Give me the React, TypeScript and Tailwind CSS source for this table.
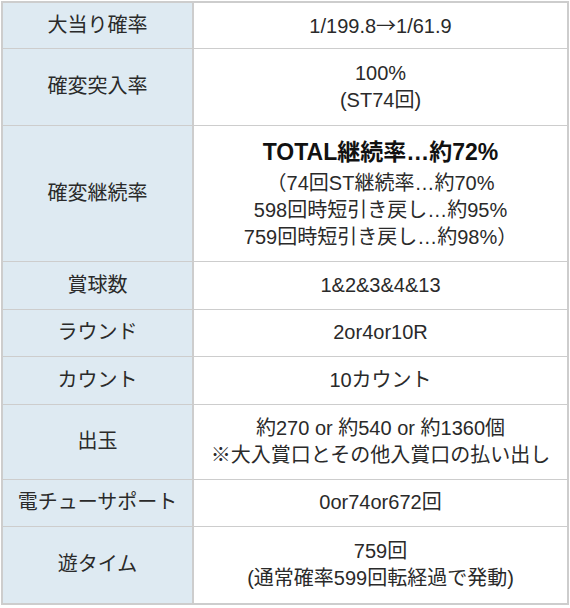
const jp = "font-['Noto_Sans_CJK_JP',sans-serif]";

const rows: { label: string; h: string; content: React.ReactNode }[] = [
  {
    label: "大当り確率",
    h: "h-[46px]",
    content: (
      <>
        1/199.8<span className={jp}>→</span>1/61.9
      </>
    ),
  },
  {
    label: "確変突入率",
    h: "h-[77px]",
    content: (
      <>
        100%
        <br />
        (ST74回)
      </>
    ),
  },
  {
    label: "確変継続率",
    h: "h-[136px]",
    content: (
      <>
        <div className="font-bold text-[23px] leading-[35px] text-[#111]">TOTAL継続率…約72%</div>
        （74回ST継続率…約70%
        <br />
        598回時短引き戻し…約95%
        <br />
        759回時短引き戻し…約98%）
      </>
    ),
  },
  { label: "賞球数", h: "h-[48px]", content: "1&2&3&4&13" },
  { label: "ラウンド", h: "h-[47px]", content: "2or4or10R" },
  { label: "カウント", h: "h-[48px]", content: "10カウント" },
  {
    label: "出玉",
    h: "h-[75px]",
    content: (
      <>
        約270 or 約540 or 約1360個
        <br />
        ※大入賞口とその他入賞口の払い出し
      </>
    ),
  },
  { label: "電チューサポート", h: "h-[47px]", content: "0or74or672回" },
  {
    label: "遊タイム",
    h: "h-[78px]",
    content: (
      <>
        759回
        <br />
        (通常確率599回転経過で発動)
      </>
    ),
  },
];

export default function App() {
  return (
    <div className="bg-white w-[570px] h-[608px] pl-[1px] pt-[1px] font-['Liberation_Sans','Noto_Sans_CJK_JP',sans-serif] text-[#2a2a2a] text-[20px] leading-[27px]">
      <table className="w-[568px] border-collapse border-2 border-[#cdcdcd]">
        <tbody>
          {rows.map((r) => (
            <tr key={r.label} className={r.h}>
              <td className="w-[191px] bg-[#deeaf2] text-center align-middle border border-r-2 border-[#cdcdcd] px-1">
                {r.label}
              </td>
              <td className="text-center align-middle border border-[#cdcdcd] px-1">{r.content}</td>
            </tr>
          ))}
        </tbody>
      </table>
    </div>
  );
}
